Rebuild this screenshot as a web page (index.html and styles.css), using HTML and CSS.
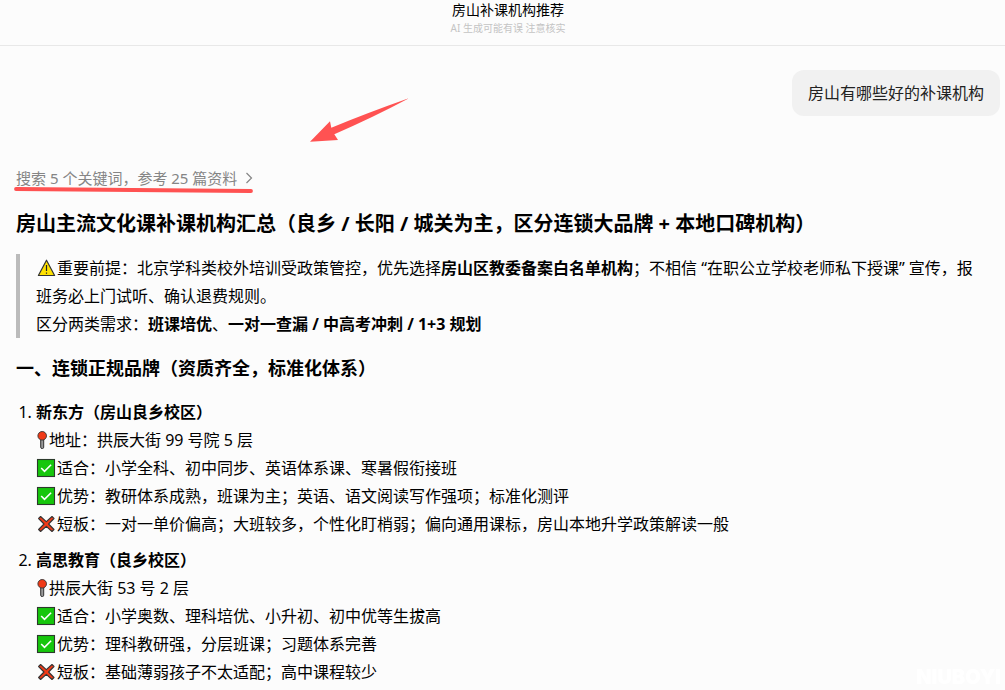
FILE: index.html
```
<!DOCTYPE html>
<html lang="zh-CN">
<head>
<meta charset="utf-8">
<meta name="viewport" content="width=device-width, initial-scale=1">
<title>房山补课机构推荐</title>
<link rel="stylesheet" href="styles.css">
</head>
<body>
<svg class="sprite" aria-hidden="true">
  <symbol id="warn" viewBox="0 0 21 20"><path d="M10.5 2.2 18.6 17.5H2.4Z" fill="#ffe100" stroke="#333" stroke-width="1.2" stroke-linejoin="round"/><path d="M10.5 7v6M10.5 14.5v1.3" stroke="#222" stroke-width="1.2" fill="none"/></symbol>
  <symbol id="pin" viewBox="0 0 13 20"><rect x="4.7" y="8" width="3" height="10.5" rx="1.3" fill="#999" stroke="#333"/><circle cx="6.2" cy="5.8" r="4.3" fill="#f03a17" stroke="#333" stroke-width=".9"/></symbol>
  <symbol id="check" viewBox="0 0 21 20"><rect x="1.5" y="1.5" width="17" height="17" fill="#16c60c" stroke="#2c3a2c" stroke-width="1.1"/><path d="m5.2 10 3.3 3.3 6.6-6.6" fill="none" stroke="#fff" stroke-width="1.6"/></symbol>
  <symbol id="cross" viewBox="0 0 21 20"><path d="m4.6 2.5 5.7 5.2 5.700-5.200 2 2-5.400 5.500 5.400 5.500-2 2-5.700-5.200-5.700 5.200-2-2L8 10 2.600 4.500Z" fill="#f03a17" stroke="#333" stroke-width="1.1" stroke-linejoin="round"/></symbol>
</svg>
<header class="topbar">
  <div class="topbar-title">房山补课机构推荐</div>
  <div class="topbar-note">AI 生成可能有误 注意核实</div>
</header>
<main class="chat">
  <div class="question">房山有哪些好的补课机构</div>
  <div class="sources-row">
    <button class="sources" type="button">搜索 5 个关键词，参考 25 篇资料
      <svg class="chevron" viewBox="0 0 8 12" aria-hidden="true"><path d="m1.500 1 5 5-5 5" fill="none" stroke="currentColor" stroke-width="1.2"/></svg>
    </button>
    <svg class="underline" viewBox="0 0 242 8" aria-hidden="true"><path d="M3 3 238 5" stroke="#ff5252" stroke-width="3.800" stroke-linecap="round"/></svg>
    <svg class="arrow" viewBox="0 0 100 46" aria-hidden="true"><path d="M98 .500 Q57 15 21.300 29.700L20 23.300 0 43.700 28 42 24.300 36.300Q64 19 98 .800Z" fill="#ff5252"/></svg>
  </div>
  <article class="answer">
    <h1>房山主流文化课补课机构汇总（良乡 / 长阳 / 城关为主，区分连锁大品牌 + 本地口碑机构）</h1>
    <blockquote>
      <p><svg class="emoji" role="img" aria-label="注意"><use href="#warn"/></svg>重要前提：北京学科类校外培训受政策管控，优先选择<strong>房山区教委备案白名单机构</strong>；不相信 “在职公立学校老师私下授课” 宣传，报班务必上门试听、确认退费规则。</p>
      <p>区分两类需求：<strong>班课培优</strong>、<strong>一对一查漏 / 中高考冲刺 / 1+3 规划</strong></p>
    </blockquote>
    <h2>一、连锁正规品牌（资质齐全，标准化体系）</h2>
    <ol>
      <li>
        <p><strong>新东方（房山良乡校区）</strong></p>
        <p><svg class="emoji pin" aria-hidden="true"><use href="#pin"/></svg>地址：拱辰大街 99 号院 5 层</p>
        <p><svg class="emoji" aria-hidden="true"><use href="#check"/></svg>适合：小学全科、初中同步、英语体系课、寒暑假衔接班</p>
        <p><svg class="emoji" aria-hidden="true"><use href="#check"/></svg>优势：教研体系成熟，班课为主；英语、语文阅读写作强项；标准化测评</p>
        <p><svg class="emoji" aria-hidden="true"><use href="#cross"/></svg>短板：一对一单价偏高；大班较多，个性化盯梢弱；偏向通用课标，房山本地升学政策解读一般</p>
      </li>
      <li>
        <p><strong>高思教育（良乡校区）</strong></p>
        <p><svg class="emoji pin" aria-hidden="true"><use href="#pin"/></svg>拱辰大街 53 号 2 层</p>
        <p><svg class="emoji" aria-hidden="true"><use href="#check"/></svg>适合：小学奥数、理科培优、小升初、初中优等生拔高</p>
        <p><svg class="emoji" aria-hidden="true"><use href="#check"/></svg>优势：理科教研强，分层班课；习题体系完善</p>
        <p><svg class="emoji" aria-hidden="true"><use href="#cross"/></svg>短板：基础薄弱孩子不太适配；高中课程较少</p>
      </li>
    </ol>
  </article>
</main>
<div class="watermark">NIUBOYI</div>
</body>
</html>
```
FILE: styles.css
```
* { box-sizing: border-box; }
body {
  margin: 0;
  background: #fcfcfc;
  color: #000;
  font: 16px/28px "Noto Sans", "Noto Sans CJK SC", sans-serif;
}
h1, h2, p, ol, blockquote { margin: 0; padding: 0; }
.sprite { position: absolute; width: 0; height: 0; }
.topbar {
  padding: 0 0 9px 11px;
  border-bottom: 1px solid #e8e8e8;
  text-align: center;
}
.topbar-title { font-size: 14px; line-height: 20px; }
.topbar-note { font-size: 10px; line-height: 16px; color: #c4c4c4; }
.chat { display: flex; flex-direction: column; padding: 24px 5px 4px 16px; }
.question {
  align-self: flex-end;
  padding: 9px 16px;
  border-radius: 12px;
  background: #f1f1f1;
  color: #222;
}
.sources-row { position: relative; align-self: flex-start; margin-top: 50px; }
.sources {
  display: flex;
  align-items: center;
  gap: 8px;
  padding: 0;
  border: 0;
  background: none;
  color: #858585;
  font: inherit;
  font-size: 15px;
  line-height: 24px;
}
.chevron { width: 8px; height: 12px; }
.underline { position: absolute; left: -3px; top: 20px; width: 242px; height: 8px; }
.arrow { position: absolute; left: 294px; top: -68px; width: 100px; height: 46px; }
.answer { display: flex; flex-direction: column; gap: 16px; margin-top: 20px; padding-right: 16px; }
h1 { font-size: 20px; line-height: 28px; }
h2 { font-size: 18px; line-height: 28px; }
blockquote { border-left: 4px solid #bbb; padding-left: 16px; }
ol { display: flex; flex-direction: column; gap: 8px; padding-left: 20px; }
.emoji { width: 21px; height: 20px; vertical-align: -4px; }
.pin { width: 13px; }
.watermark {
  position: fixed;
  right: 4px;
  bottom: 2px;
  color: #fff;
  font: 900 20px/22px Inter, sans-serif;
}
```
